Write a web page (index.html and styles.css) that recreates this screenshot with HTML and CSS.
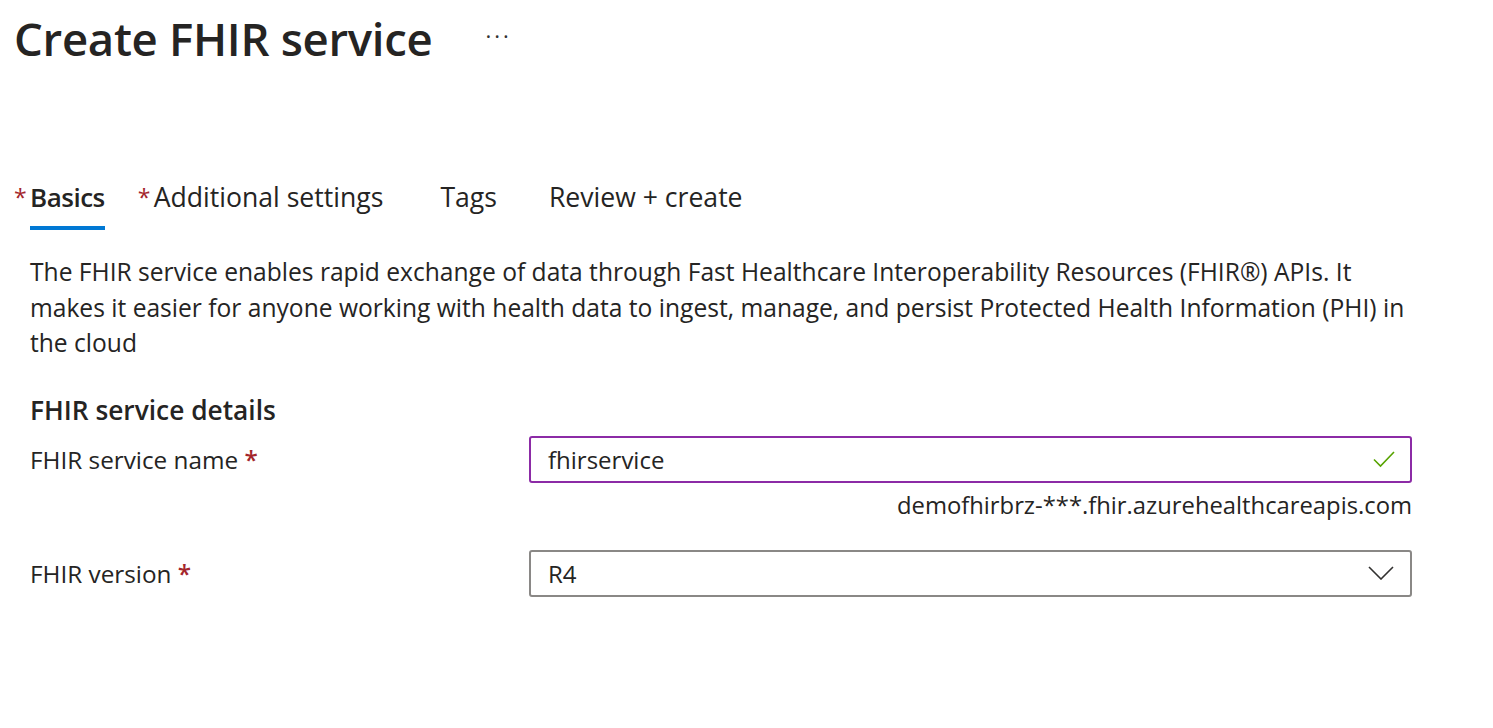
FILE: index.html
```html
<!DOCTYPE html>
<html lang="en">
<head>
<meta charset="utf-8">
<title>Create FHIR service</title>
<link rel="stylesheet" href="styles.css">
</head>
<body>
<div class="page">
  <header class="page-header">
    <h1 class="title">Create FHIR service</h1>
    <span class="more">···</span>
  </header>

  <nav class="tabs">
    <div class="tab tab-active"><span class="req">*</span><span class="tab-label">Basics</span></div>
    <div class="tab"><span class="req">*</span><span class="tab-label">Additional settings</span></div>
    <div class="tab tab-plain tab-tags"><span class="tab-label">Tags</span></div>
    <div class="tab tab-plain"><span class="tab-label">Review + create</span></div>
  </nav>

  <div class="content">
    <p class="intro">The FHIR service enables rapid exchange of data through Fast Healthcare Interoperability Resources (FHIR®) APIs. It makes it easier for anyone working with health data to ingest, manage, and persist Protected Health Information (PHI) in the cloud</p>

    <h2 class="section-title">FHIR service details</h2>

    <div class="field-row">
      <label class="field-label">FHIR service name <span class="req-label">*</span></label>
      <div class="field-control">
        <div class="input input-valid">
          <span class="input-value">fhirservice</span>
          <svg class="check" width="24" height="18" viewBox="0 0 24 18"><path d="M2 9.5 L8.5 16 L22 2" fill="none" stroke="#57a300" stroke-width="1.6"/></svg>
        </div>
        <div class="hint">demofhirbrz-***.fhir.azurehealthcareapis.com</div>
      </div>
    </div>

    <div class="field-row field-row-second">
      <label class="field-label">FHIR version <span class="req-label">*</span></label>
      <div class="field-control">
        <div class="input input-select">
          <span class="input-value">R4</span>
          <svg class="chevron" width="26" height="14" viewBox="0 0 26 14"><path d="M1 1 L13 13 L25 1" fill="none" stroke="#323130" stroke-width="1.6"/></svg>
        </div>
      </div>
    </div>
  </div>
</div>
</body>
</html>
```

FILE: styles.css
```css
html, body {
  margin: 0;
  padding: 0;
  background: #ffffff;
}

body {
  font-family: "Open Sans", "Noto Sans", "Liberation Sans", sans-serif;
  color: #252423;
}

.page {
  padding: 0 0 0 14px;
  width: 1398px;
}

.page-header {
  display: flex;
  align-items: center;
  height: 76px;
}

.title {
  margin: 0;
  font-size: 45.5px;
  font-weight: 600;
  letter-spacing: -0.3px;
  line-height: 60px;
  color: #252423;
}

.more {
  margin-left: 53px;
  font-size: 22px;
  letter-spacing: 3px;
  color: #323130;
  position: relative;
  top: -3px;
}

.tabs {
  display: flex;
  margin-top: 104px;
  height: 74px;
}

.tab {
  display: flex;
  align-items: flex-start;
  margin-right: 33px;
  font-size: 26.6px;
  line-height: 34px;
  color: #252423;
}

.tab-plain {
  padding-left: 19px;
}

.tab-tags {
  padding-left: 24px;
}

.tab-active {
  font-size: 26px;
}

.tab-active .tab-label {
  font-weight: 600;
  letter-spacing: -0.5px;
  border-bottom: 4px solid #0078d4;
  padding-bottom: 12px;
}

.req {
  color: #a4262c;
  font-size: 23px;
  width: 16px;
}

.content {
  padding-left: 16px;
}

.intro {
  margin: 0;
  font-size: 24.6px;
  line-height: 35.5px;
  color: #252423;
}

.section-title {
  margin: 32px 0 0;
  font-size: 26.3px;
  font-weight: 600;
  line-height: 34px;
}

.field-row {
  display: flex;
  margin-top: 9px;
}

.field-row-second {
  margin-top: 23px;
}

.field-label {
  width: 499px;
  font-size: 24.3px;
  line-height: 47px;
}

.req-label {
  color: #a4262c;
  font-weight: 600;
}

.field-control {
  flex: 1;
  display: flex;
  flex-direction: column;
}

.input {
  box-sizing: border-box;
  height: 47px;
  border: 2px solid #8a8886;
  border-radius: 3px;
  display: flex;
  align-items: center;
  justify-content: space-between;
  padding: 0 16px 0 17px;
  font-size: 24px;
}

.input-valid {
  border-color: #8c2ba6;
}

.check {
  margin-right: -2px;
}

.hint {
  text-align: right;
  font-size: 23.8px;
  line-height: 44px;
}
```
